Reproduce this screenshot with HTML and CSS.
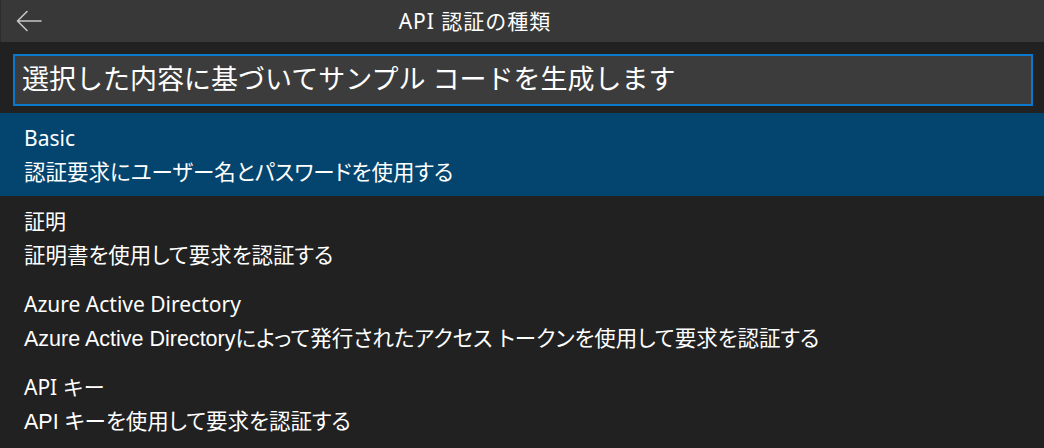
FILE: index.html
```html
<!DOCTYPE html>
<html lang="ja">
<head>
<meta charset="utf-8">
<title>API 認証の種類</title>
<link rel="stylesheet" href="styles.css">
</head>
<body>
<div class="panel">
  <div class="header">
    <span class="back">
      <svg width="26" height="22" viewBox="0 0 26 22" aria-hidden="true">
        <path d="M1.5 11 H25 M11 1.5 L1.5 11 L11 20.5" fill="none" stroke="#c5c5c5" stroke-width="1.6" stroke-linecap="round" stroke-linejoin="round"/>
      </svg>
    </span>
    <span class="title">API 認証の種類</span>
  </div>
  <div class="input-wrap">
    <div class="input">選択した内容に基づいてサンプル コードを生成します</div>
  </div>
  <ul class="list">
    <li class="item selected">
      <div class="label">Basic</div>
      <div class="desc">認証要求にユーザー名とパスワードを使用する</div>
    </li>
    <li class="item">
      <div class="label">証明</div>
      <div class="desc">証明書を使用して要求を認証する</div>
    </li>
    <li class="item">
      <div class="label">Azure Active Directory</div>
      <div class="desc">Azure Active Directoryによって発行されたアクセス トークンを使用して要求を認証する</div>
    </li>
    <li class="item">
      <div class="label">API キー</div>
      <div class="desc">API キーを使用して要求を認証する</div>
    </li>
  </ul>
</div>
</body>
</html>
```
FILE: styles.css
```css
html, body {
  margin: 0;
  padding: 0;
  background: #212121;
}
body {
  width: 1044px;
  height: 448px;
  overflow: hidden;
  font-family: "Noto Sans", "Noto Sans CJK JP", sans-serif;
  color: #ffffff;
}
.panel {
  display: flex;
  flex-direction: column;
}
.header {
  height: 42px;
  background: #383838;
  display: flex;
  align-items: center;
  border-left: 1px solid #2c2c2c;
}
.back {
  width: 55px;
  display: flex;
  justify-content: flex-start;
  padding-left: 15px;
  box-sizing: border-box;
}
.back svg {
  display: block;
}
.title {
  flex: 1;
  text-align: center;
  padding-right: 150px;
  font-size: 21px;
  letter-spacing: 1px;
  line-height: 42px;
}
.input-wrap {
  padding: 12px 11px 7px 13px;
}
.input {
  height: 52px;
  box-sizing: border-box;
  border: 2px solid #0a78cc;
  background: #3c3c3c;
  padding: 0 7px;
  font-size: 27px;
  line-height: 46px;
  white-space: nowrap;
}
.list {
  list-style: none;
  margin: 0;
  padding: 0;
}
.item {
  height: 83px;
  box-sizing: border-box;
  padding: 8px 0 5px 24px;
}
.item.selected {
  background: #03456e;
}
.label {
  font-size: 21px;
  line-height: 35px;
  white-space: nowrap;
}
.desc {
  font-family: "Liberation Sans", "Noto Sans CJK JP", sans-serif;
  font-size: 21.5px;
  line-height: 35px;
  white-space: nowrap;
  font-feature-settings: "palt";
}
```
